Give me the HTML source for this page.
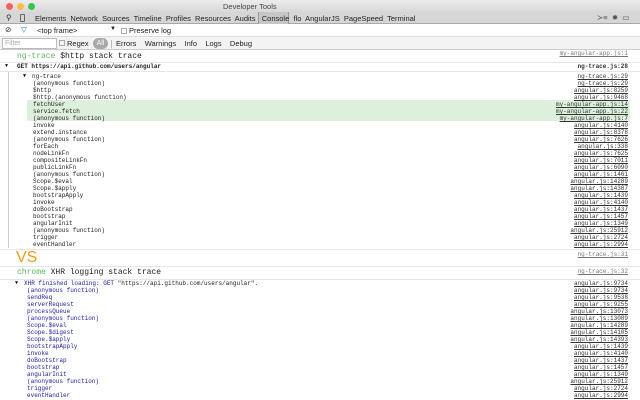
<!DOCTYPE html>
<html><head><meta charset="utf-8"><style>
*{margin:0;padding:0;box-sizing:border-box}
body{width:640px;height:400px;overflow:hidden;background:#fff;font-family:"Liberation Sans",sans-serif;position:relative}
.a{position:absolute;white-space:pre}
.m{font-family:"Liberation Mono",monospace;font-size:6px;line-height:7px}
.r{position:absolute;right:12px;text-align:right;font-family:"Liberation Mono",monospace;font-size:6px;line-height:7px;color:#333;text-decoration:underline;white-space:pre}
.hr{position:absolute;left:0;width:640px;height:1px;background:#e6e6e6}
.tab{font-size:7.5px;color:#222}
.b{color:#1a1aa6}
</style></head><body>
<div class="a" style="left:0;top:0;width:640px;height:12px;background:linear-gradient(#ececec,#d8d8d8)"></div>
<div class="a" style="left:6px;top:3px;width:7px;height:7px;border-radius:50%;background:#fc605c"></div>
<div class="a" style="left:17px;top:3px;width:7px;height:7px;border-radius:50%;background:#fdbc40"></div>
<div class="a" style="left:28px;top:3px;width:7px;height:7px;border-radius:50%;background:#34c84a"></div>
<div class="a" style="left:223px;top:2px;font-size:7.5px;color:#444">Developer Tools</div>
<div class="a" style="left:0;top:12px;width:640px;height:12px;background:#d6d6d6;border-bottom:1px solid #a8a8a8"></div>
<div class="a" style="left:258px;top:12px;width:31px;height:12px;background:#c6c6c6;border-left:1px solid #999;border-right:1px solid #999"></div>
<div class="a tab" style="left:6px;top:13px">⚲</div>
<div class="a" style="left:20px;top:14px;width:5px;height:8px;border:1px solid #666;border-radius:1px"></div>
<div class="a tab" style="left:35px;top:13.5px">Elements&nbsp; Network&nbsp; Sources&nbsp; Timeline&nbsp; Profiles&nbsp; Resources&nbsp; Audits&nbsp;&nbsp; Console&nbsp; flo&nbsp; AngularJS&nbsp; PageSpeed&nbsp; Terminal</div>
<div class="a tab" style="left:597px;top:13px;color:#555">≻≡&nbsp; ✹&nbsp; ▭</div>
<div class="a" style="left:0;top:24px;width:640px;height:13px;background:#fff;border-bottom:1px solid #ddd"></div>
<div class="a tab" style="left:5px;top:25px">⊘</div>
<div class="a tab" style="left:21px;top:25px;color:#3879d9">▽</div>
<div class="a tab" style="left:37px;top:26px">&lt;top frame&gt;</div>
<div class="a tab" style="left:110px;top:26px;font-size:6px">▼</div>
<div class="a" style="left:121px;top:28px;width:6px;height:6px;border:1px solid #aaa"></div>
<div class="a tab" style="left:129px;top:26px">Preserve log</div>
<div class="a" style="left:0;top:37px;width:640px;height:13px;background:#f3f3f3;border-bottom:1px solid #ccc"></div>
<div class="a" style="left:2px;top:38px;width:55px;height:11px;background:#fff;border:1px solid #bbb;font-size:7px;color:#aaa;padding-left:2px;line-height:9px">Filter</div>
<div class="a" style="left:59px;top:40px;width:6px;height:6px;border:1px solid #aaa"></div>
<div class="a tab" style="left:67px;top:39px">Regex</div>
<div class="a" style="left:93px;top:38px;width:15px;height:11px;border-radius:6px;background:#a8a8a8;color:#fff;font-size:7px;text-align:center;line-height:11px">All</div>
<div class="a" style="left:111px;top:40px;width:1px;height:8px;background:#bbb"></div>
<div class="a tab" style="left:116px;top:39px">Errors&nbsp;&nbsp;&nbsp; Warnings&nbsp;&nbsp;&nbsp; Info&nbsp;&nbsp;&nbsp; Logs&nbsp;&nbsp;&nbsp; Debug</div>

<div class="a" style="left:17px;top:52px;font-family:'Liberation Mono',monospace;font-size:8px;color:#222"><span style="color:#5cb85c">ng-trace</span> $http stack trace</div>
<div class="r" style="top:50px;color:#777">my-angular-app.js:1</div>
<div class="hr" style="top:62px"></div>
<div class="a m" style="left:5px;top:63px;font-size:5px">▼</div>
<div class="a m" style="left:17px;top:63px;font-weight:bold;color:#222">GET https://api.github.com/users/angular</div>
<div class="r" style="top:63px;font-weight:bold;text-decoration:none">ng-trace.js:28</div>
<div class="hr" style="top:71px"></div>
<div class="a" style="left:8px;top:72px;width:1px;height:176px;background:#ccc"></div>
<div class="a" style="left:27px;top:100px;width:603px;height:21px;background:#ddf0dc"></div>
<div class="a m" style="left:23px;top:73px;font-size:5px">▼</div>
<div class="a m" style="left:32px;top:73px;color:#222">ng-trace</div>
<div class="a m" style="left:33px;top:80px;color:#222">(anonymous function)
$http
$http.(anonymous function)
fetchUser
service.fetch
(anonymous function)
invoke
extend.instance
(anonymous function)
forEach
nodeLinkFn
compositeLinkFn
publicLinkFn
(anonymous function)
Scope.$eval
Scope.$apply
bootstrapApply
invoke
doBootstrap
bootstrap
angularInit
(anonymous function)
trigger
eventHandler</div>
<div class="r" style="top:73px">ng-trace.js:29
ng-trace.js:29
angular.js:8259
angular.js:9468
my-angular-app.js:14
my-angular-app.js:22
my-angular-app.js:7
angular.js:4140
angular.js:8378
angular.js:7626
angular.js:338
angular.js:7625
angular.js:7011
angular.js:6090
angular.js:1461
angular.js:14289
angular.js:14387
angular.js:1439
angular.js:4140
angular.js:1437
angular.js:1457
angular.js:1349
angular.js:25912
angular.js:2724
angular.js:2994</div>
<div class="hr" style="top:249px"></div>
<div class="a" style="left:16px;top:248px;font-size:16px;color:#f39c12;line-height:20px">VS</div>
<div class="r" style="top:251px;color:#777">ng-trace.js:31</div>
<div class="hr" style="top:266px"></div>
<div class="a" style="left:17px;top:268px;font-family:'Liberation Mono',monospace;font-size:8px;color:#222"><span style="color:#5cb85c">chrome</span> XHR logging stack trace</div>
<div class="r" style="top:268px;color:#777">ng-trace.js:32</div>
<div class="hr" style="top:279px"></div>
<div class="a m" style="left:15px;top:280px;font-size:5px">▼</div>
<div class="a m b" style="left:24px;top:280px">XHR finished loading: GET <span style="color:#222">"https://api.github.com/users/angular"</span>.</div>
<div class="a m b" style="left:27px;top:287px">(anonymous function)
sendReq
serverRequest
processQueue
(anonymous function)
Scope.$eval
Scope.$digest
Scope.$apply
bootstrapApply
invoke
doBootstrap
bootstrap
angularInit
(anonymous function)
trigger
eventHandler</div>
<div class="r" style="top:280px">angular.js:9734
angular.js:9734
angular.js:9538
angular.js:9255
angular.js:13073
angular.js:13089
angular.js:14289
angular.js:14105
angular.js:14393
angular.js:1439
angular.js:4140
angular.js:1437
angular.js:1457
angular.js:1349
angular.js:25912
angular.js:2724
angular.js:2994</div>
</body></html>
